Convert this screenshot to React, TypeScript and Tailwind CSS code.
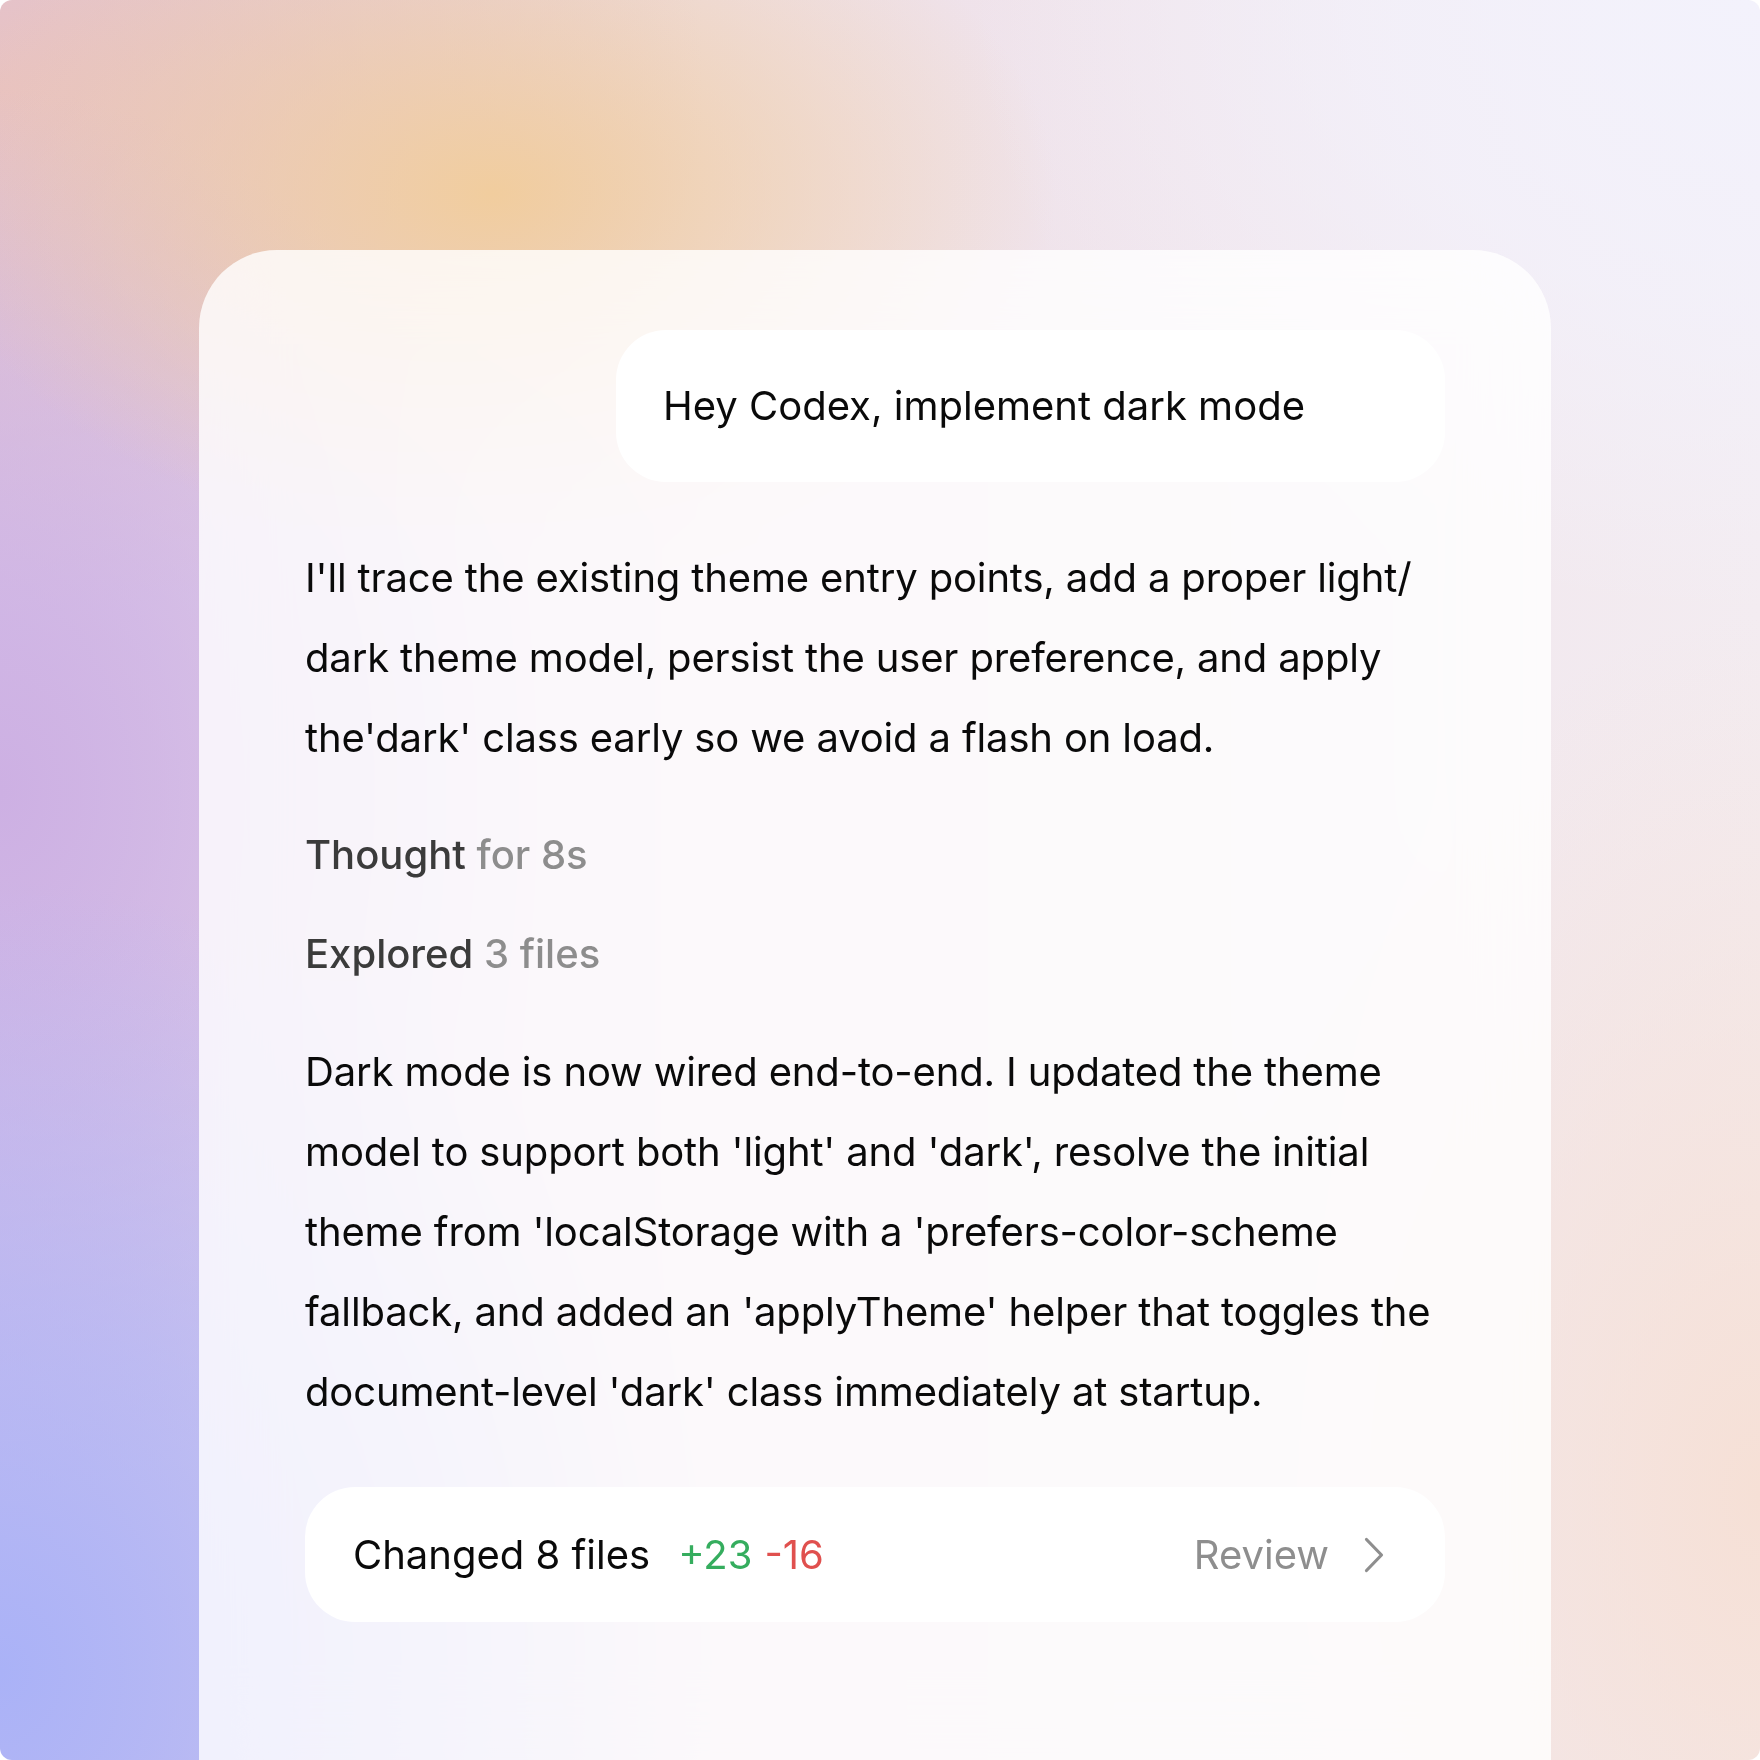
import React from "react";

const para1 = [
  "I'll trace the existing theme entry points, add a proper light/",
  "dark theme model, persist the user preference, and apply",
  "the'dark' class early so we avoid a flash on load.",
];

const para2 = [
  "Dark mode is now wired end-to-end. I updated the theme",
  "model to support both 'light' and 'dark', resolve the initial",
  "theme from 'localStorage with a 'prefers-color-scheme",
  "fallback, and added an 'applyTheme' helper that toggles the",
  "document-level 'dark' class immediately at startup.",
];

export default function App() {
  return (
    <div className="w-[1760px] h-[1760px] bg-white">
      <div
        className="relative w-[1760px] h-[1760px] overflow-hidden rounded-[12px] bg-[#efe6ef] bg-[radial-gradient(ellipse_32%_20%_at_28%_11%,#f1cd9e_0%,rgba(241,205,158,0.55)_45%,rgba(241,205,158,0)_100%),radial-gradient(ellipse_40%_45%_at_0%_95%,#aab2f7_0%,rgba(170,178,247,0.6)_45%,rgba(170,178,247,0)_100%),radial-gradient(ellipse_30%_40%_at_0%_45%,#cdb0e3_0%,rgba(205,176,227,0.5)_50%,rgba(205,176,227,0)_100%),radial-gradient(ellipse_40%_30%_at_0%_5%,#e8c2c2_0%,rgba(232,194,194,0)_100%),radial-gradient(ellipse_45%_35%_at_100%_0%,#f3f2fc_0%,rgba(243,242,252,0.7)_50%,rgba(243,242,252,0)_100%),radial-gradient(ellipse_30%_50%_at_100%_85%,#f6e0d6_0%,rgba(246,224,214,0)_100%),linear-gradient(90deg,#d9c7ea_0%,#eedfe8_40%,#f3ecf1_100%)]"
        style={{ fontFamily: "Inter, 'Noto Sans', sans-serif" }}
      >
        <div className="ml-[199px] mt-[250px] w-[1352px] min-h-[1600px] rounded-[78px] bg-white/80 backdrop-blur-2xl px-[106px] pt-[80px]">
          <div className="flex justify-end">
            <div className="h-[152px] w-[829px] rounded-[50px] bg-white flex items-center pl-[47px]">
              <span className="text-[40px] leading-[48px] text-[#0a0a0a] whitespace-nowrap">
                Hey Codex, implement dark mode
              </span>
            </div>
          </div>

          <div className="mt-[56px] text-[40px] leading-[80px] tracking-[-0.15px] text-[#0a0a0a]">
            {para1.map((l) => (
              <div key={l} className="whitespace-nowrap">
                {l}
              </div>
            ))}
          </div>

          <div className="mt-[37px] text-[40px] leading-[80px] font-medium whitespace-nowrap">
            <span className="text-[#3b3b3b]">Thought</span>{" "}
            <span className="text-[#8d8d8d]">for 8s</span>
          </div>
          <div className="mt-[19px] text-[40px] leading-[80px] font-medium whitespace-nowrap">
            <span className="text-[#3b3b3b]">Explored</span>{" "}
            <span className="text-[#8d8d8d]">3 files</span>
          </div>

          <div className="mt-[38px] text-[40px] leading-[80px] tracking-[-0.15px] text-[#0a0a0a]">
            {para2.map((l) => (
              <div key={l} className="whitespace-nowrap">
                {l}
              </div>
            ))}
          </div>

          <div className="mt-[55px] h-[135px] rounded-[50px] bg-white flex items-center pl-[48px] pr-[61px] text-[40px] leading-[48px]">
            <span className="text-[#0a0a0a] whitespace-nowrap">Changed 8 files</span>
            <span className="ml-[28px] text-[#35ad5e] whitespace-nowrap">+23</span>
            <span className="ml-[12px] text-[#e0504e] whitespace-nowrap">-16</span>
            <span className="ml-auto text-[#8e8e8e] whitespace-nowrap">Review</span>
            <svg
              className="ml-[35px]"
              width="20"
              height="36"
              viewBox="0 0 20 36"
              fill="none"
            >
              <path
                d="M2.5 2.5 L17.5 18 L2.5 33.5"
                stroke="#8e8e8e"
                strokeWidth="3.2"
                strokeLinecap="round"
                strokeLinejoin="round"
              />
            </svg>
          </div>
        </div>
      </div>
    </div>
  );
}
